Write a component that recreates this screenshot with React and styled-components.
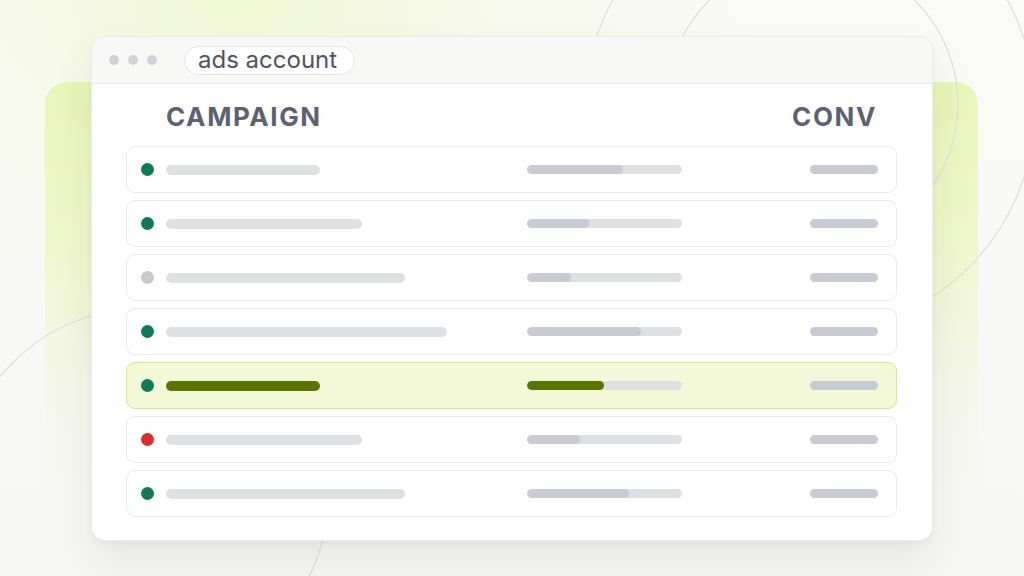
import styled, { createGlobalStyle } from 'styled-components';

const GlobalStyle = createGlobalStyle`
  html, body {
    margin: 0;
    padding: 0;
    background: #fafaf9;
  }
  body {
    font-family: Inter, "Noto Sans", "Liberation Sans", sans-serif;
  }
`;

const Stage = styled.div`
  width: 1024px;
  height: 576px;
  overflow: hidden;
  display: grid;
  grid-template: 1fr / 1fr;
  background:
    radial-gradient(ellipse 560px 340px at 240px 0px, #f2f9d5 0%, rgba(246, 250, 228, 0.6) 45%, rgba(250, 250, 249, 0) 100%),
    linear-gradient(180deg, #fafaf8 0%, #f7f7f6 100%);
`;

const Backdrop = styled.div`
  grid-area: 1 / 1;
  margin: 82px 46px 0 45px;
  height: 430px;
  border-radius: 22px;
  background: linear-gradient(180deg, #eaf5b8 0%, #eff7cc 35%, rgba(244, 247, 226, 0.6) 70%, rgba(250, 250, 248, 0) 100%);
`;

const Decor = styled.svg`
  grid-area: 1 / 1;
  width: 1024px;
  height: 576px;
`;

const Window = styled.div`
  grid-area: 1 / 1;
  align-self: start;
  margin: 36px 91px 0 91px;
  height: 505px;
  box-sizing: border-box;
  background: #ffffff;
  border: 1px solid #ebebe8;
  border-radius: 14px;
  overflow: hidden;
  box-shadow: 0 22px 44px rgba(40, 40, 30, 0.08), 0 4px 10px rgba(40, 40, 30, 0.03);
  display: flex;
  flex-direction: column;
`;

const TitleBar = styled.div`
  height: 46px;
  flex: none;
  background: #f8f8f7;
  border-bottom: 1px solid #e8e8e5;
  display: flex;
  align-items: center;
  padding-left: 17px;
  gap: 27px;
`;

const Dots = styled.div`
  display: flex;
  gap: 9px;
`;

const Dot = styled.span`
  width: 10px;
  height: 10px;
  border-radius: 50%;
  background: #d1d1d9;
`;

const AddressPill = styled.div`
  height: 29px;
  box-sizing: border-box;
  width: 171px;
  border: 1px solid #e4e4e1;
  border-radius: 15px;
  background: #ffffff;
  display: flex;
  align-items: center;
  padding-left: 13px;
  font-size: 24px;
  letter-spacing: 0;
  color: #4f5460;
  line-height: 1;
`;

const Content = styled.div`
  padding: 0 35px 0 34px;
  display: flex;
  flex-direction: column;
  gap: 7px;
`;

const HeaderRow = styled.div`
  height: 55px;
  display: flex;
  align-items: center;
  justify-content: space-between;
  padding: 0 20px 0 40px;
`;

const HeaderLabel = styled.div`
  font-size: 26px;
  font-weight: 700;
  letter-spacing: 1.6px;
  color: #5d6270;
  line-height: 1;
  padding-top: 10px;
`;

const Row = styled.div`
  height: 47px;
  box-sizing: border-box;
  border-radius: 9px;
  border: 1px solid ${p => (p.$active ? '#d6eb7c' : '#e9e9e6')};
  background: ${p => (p.$active ? '#f2f8d8' : '#ffffff')};
  display: flex;
  align-items: center;
  padding: 0 18px 0 14px;
`;

const Status = styled.span`
  width: 13px;
  height: 13px;
  border-radius: 50%;
  flex: none;
  background: ${p => p.$color};
`;

const NameCell = styled.div`
  width: 361px;
  margin-left: 12px;
  flex: none;
`;

const Bar = styled.div`
  height: 10px;
  border-radius: 5px;
  background: ${p => (p.$active ? '#5c7500' : '#dfe0e4')};
`;

const Track = styled.div`
  width: 155px;
  height: 9px;
  border-radius: 5px;
  background: #dfe0e4;
  flex: none;
  overflow: hidden;
`;

const Fill = styled.div`
  height: 100%;
  border-radius: 5px;
  background: ${p => (p.$active ? '#5c7500' : '#c8cbd3')};
`;

const Conv = styled.div`
  margin-left: auto;
  width: 68px;
  height: 9px;
  border-radius: 5px;
  background: #c8cbd3;
`;

const GREEN = '#0f7a55';
const GREY = '#c9cad0';
const RED = '#dd2a2a';

const rows = [
  { status: GREEN, name: 154, fill: 96 },
  { status: GREEN, name: 196, fill: 62 },
  { status: GREY, name: 239, fill: 44 },
  { status: GREEN, name: 281, fill: 114 },
  { status: GREEN, name: 154, fill: 77, active: true },
  { status: RED, name: 196, fill: 53 },
  { status: GREEN, name: 239, fill: 102 },
];

export default function App() {
  return (
    <>
      <GlobalStyle />
      <Stage>
        <Backdrop />
        <Decor viewBox="0 0 1024 576" fill="none" stroke="#e0e0db" strokeWidth="1.3">
          <circle cx="812" cy="104" r="146" />
          <circle cx="810" cy="108" r="225" />
          <circle cx="144" cy="493" r="185" />
        </Decor>
        <Window>
          <TitleBar>
            <Dots>
              <Dot />
              <Dot />
              <Dot />
            </Dots>
            <AddressPill>ads account</AddressPill>
          </TitleBar>
          <Content>
            <HeaderRow>
              <HeaderLabel>CAMPAIGN</HeaderLabel>
              <HeaderLabel>CONV</HeaderLabel>
            </HeaderRow>
            {rows.map((r, i) => (
              <Row key={i} $active={r.active}>
                <Status $color={r.status} />
                <NameCell>
                  <Bar $active={r.active} style={{ width: r.name }} />
                </NameCell>
                <Track>
                  <Fill $active={r.active} style={{ width: r.fill }} />
                </Track>
                <Conv />
              </Row>
            ))}
          </Content>
        </Window>
      </Stage>
    </>
  );
}
